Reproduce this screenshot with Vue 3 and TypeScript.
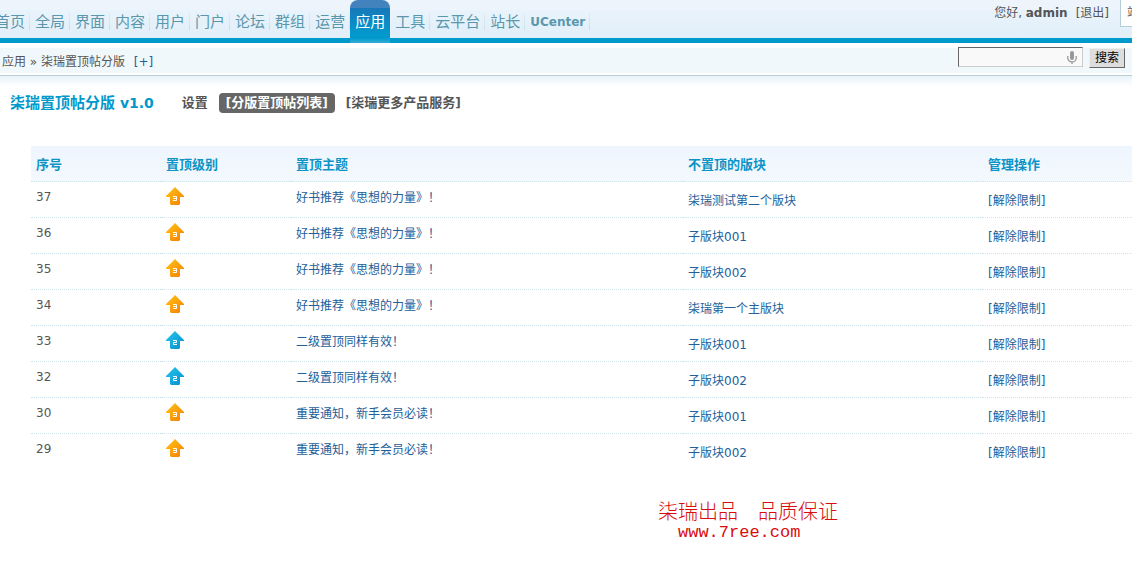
<script setup lang="ts">
import { ref } from 'vue'

interface PinnedRow {
  id: number
  level: 2 | 3
  subject: string
  forum: string
}

const menu: string[] = ['首页', '全局', '界面', '内容', '用户', '门户', '论坛', '群组', '运营', '应用', '工具', '云平台', '站长', 'UCenter']
const activeMenu = ref('应用')
const keyword = ref('')

const rows = ref<PinnedRow[]>([
  { id: 37, level: 3, subject: '好书推荐《思想的力量》\uFF01', forum: '柒瑞测试第二个版块' },
  { id: 36, level: 3, subject: '好书推荐《思想的力量》\uFF01', forum: '子版块001' },
  { id: 35, level: 3, subject: '好书推荐《思想的力量》\uFF01', forum: '子版块002' },
  { id: 34, level: 3, subject: '好书推荐《思想的力量》\uFF01', forum: '柒瑞第一个主版块' },
  { id: 33, level: 2, subject: '二级置顶同样有效\uFF01', forum: '子版块001' },
  { id: 32, level: 2, subject: '二级置顶同样有效\uFF01', forum: '子版块002' },
  { id: 30, level: 3, subject: '重要通知\uFF0C新手会员必读\uFF01', forum: '子版块001' },
  { id: 29, level: 3, subject: '重要通知\uFF0C新手会员必读\uFF01', forum: '子版块002' },
])
</script>

<template>
  <div class="page">
    <header class="header">
      <nav class="menu">
        <a
          v-for="item in menu"
          :key="item"
          href="#"
          class="menu-item"
          :class="{ active: item === activeMenu, latin: item === 'UCenter' }"
          @click.prevent="activeMenu = item"
        >{{ item }}</a>
      </nav>
      <div class="user">
        <p class="greeting">您好, <strong>admin</strong></p>
        <a href="#" class="logout">[退出]</a>
        <a href="#" class="site-home">站点首页</a>
      </div>
    </header>

    <div class="subbar">
      <p class="crumbs">应用 » 柒瑞置顶帖分版 <a href="#" class="plus">[+]</a></p>
      <form class="search" @submit.prevent>
        <div class="field">
          <input v-model="keyword" type="text" aria-label="搜索关键词" />
          <svg class="mic" width="10" height="14" viewBox="0 0 10 14" aria-hidden="true">
            <rect x="3" y="0" width="4" height="9" rx="2" fill="#999" />
            <path d="M.8 5v2a4.2 4 0 0 0 8.4 0V5M5 11v2" fill="none" stroke="#999" stroke-width="1.3" />
          </svg>
        </div>
        <button type="submit">搜索</button>
      </form>
    </div>

    <main>
      <div class="heading">
        <h1>柒瑞置顶帖分版<span> v1.0</span></h1>
        <a href="#" class="tab plain">设置</a>
        <a href="#" class="tab current"><i>[</i>分版置顶帖列表<i>]</i></a>
        <a href="#" class="tab"><i>[</i>柒瑞更多产品服务<i>]</i></a>
      </div>

      <table>
        <colgroup>
          <col class="c-id" />
          <col class="c-level" />
          <col class="c-subject" />
          <col class="c-forum" />
          <col />
        </colgroup>
        <thead>
          <tr>
            <th>序号</th>
            <th>置顶级别</th>
            <th>置顶主题</th>
            <th>不置顶的版块</th>
            <th>管理操作</th>
          </tr>
        </thead>
        <tbody>
          <tr v-for="row in rows" :key="row.id">
            <td class="num">{{ row.id }}</td>
            <td class="level">
              <svg width="18" height="18" viewBox="0 0 18 18" role="img" :aria-label="`置顶 ${row.level}`">
                <defs>
                  <linearGradient :id="`arrow-${row.id}`" x1="0" y1="0" x2="1" y2="1">
                    <stop offset="0" :stop-color="row.level === 3 ? '#ffc814' : '#25c8ee'" />
                    <stop offset="1" :stop-color="row.level === 3 ? '#f57c00' : '#078dcc'" />
                  </linearGradient>
                </defs>
                <path d="M9 0 18 9v1h-4v7l-1 1H5l-1-1v-7H0V9z" :fill="`url(#arrow-${row.id})`" />
                <path
                  :d="row.level === 3 ? 'M7 9.5h3.5v4H7M7 11.5h3.5' : 'M7 9.5h3.5v2h-3v2H11'"
                  fill="none"
                  stroke="#fff"
                  stroke-width="1"
                />
              </svg>
            </td>
            <td class="subject"><a href="#">{{ row.subject }}</a></td>
            <td class="low"><a href="#">{{ row.forum }}</a></td>
            <td class="low"><a href="#">[解除限制]</a></td>
          </tr>
        </tbody>
      </table>

      <footer>
        <p>柒瑞出品&#x3000;品质保证</p>
        <a href="#">www.7ree.com</a>
      </footer>
    </main>
  </div>
</template>

<style>
body {
  margin: 0;
  background: #fff;
}
</style>

<style scoped>
.page {
  overflow: hidden;
  font: 12px/18px "DejaVu Sans", "Noto Sans CJK SC", sans-serif;
  color: #555;
}

a {
  color: #236099;
  text-decoration: none;
}

p,
h1 {
  margin: 0;
}

.header {
  display: flex;
  justify-content: space-between;
  height: 38px;
  border-bottom: 5px solid #0099cc;
  background: linear-gradient(#edf4fb 10px, #e9f3fb 10px, #e1eff9);
}

.menu {
  display: flex;
  flex: none;
  margin-left: -10px;
}

.menu-item {
  box-sizing: border-box;
  height: 38px;
  padding: 10px 5px 0;
  font-size: 15px;
  line-height: 24px;
  color: #5a97ad;
  white-space: nowrap;
  background: linear-gradient(#e3eef4, #c9dfe9) right 12px / 1px 18px no-repeat;
}

.menu-item.latin {
  font-size: 12px;
  font-weight: bold;
}

.menu-item.active {
  height: 43px;
  border-radius: 8px 8px 0 0;
  color: #fff;
  background: linear-gradient(#4383bd 8px, #1878b9 8px, #0497cb 32px, #0099cc 38px, #35add5);
}

.user {
  display: flex;
  line-height: 26px;
  white-space: nowrap;
}

.logout {
  margin: 0 11px 0 8px;
  color: #555;
}

.site-home {
  box-sizing: border-box;
  width: 12px;
  height: 27px;
  padding-left: 6px;
  overflow: hidden;
  border: solid #b5cfd9;
  border-width: 0 0 1px 1px;
  background: #fff;
  color: #555;
}

.subbar {
  display: flex;
  justify-content: space-between;
  height: 32px;
  border-bottom: 1px solid #b9cdd3;
  background: linear-gradient(#fff 5px, #f1f8fc 5px, #f1f8fc 30px, #fff 30px);
}

.crumbs {
  padding: 10px 0 0 2px;
}

.plus {
  margin-left: 5px;
}

.search {
  display: flex;
  gap: 6px;
  padding: 4px 7px 0 0;
}

.field {
  position: relative;
}

.field input {
  box-sizing: border-box;
  display: block;
  width: 125px;
  height: 20px;
  padding: 0 20px 0 4px;
  border: 1px solid;
  border-color: #666 #ccc #ccc #666;
  background: #f9f9f9;
  font: inherit;
}

.mic {
  position: absolute;
  top: 4px;
  right: 6px;
}

.search button {
  width: 36px;
  height: 20px;
  margin-top: 1px;
  padding: 0;
  border: 1px solid;
  border-color: #eee #666 #666 #eee;
  background: #ddd;
  color: #000;
  font: inherit;
}

main {
  background: linear-gradient(#e6f2fa, #fff) top / 100% 10px no-repeat;
}

.heading {
  display: flex;
  align-items: center;
  height: 20px;
  padding: 17px 0 33px 10px;
}

h1 {
  margin-right: 28px;
  font-size: 15px;
  line-height: 20px;
  color: #0099cc;
}

h1 span {
  font-size: 14px;
}

.tab {
  margin-right: 11px;
  font-size: 13px;
  font-weight: bold;
  line-height: 20px;
  color: #555;
}

.tab.current {
  padding: 0 7px;
  border-radius: 4px;
  background: #666;
  color: #fff;
}

.tab i {
  font-size: 12px;
  font-style: normal;
}

table {
  width: calc(100% - 31px);
  margin-left: 31px;
  border-collapse: separate;
  border-spacing: 0;
  table-layout: fixed;
}

.c-id,
.c-level {
  width: 130px;
}

.c-subject {
  width: 392px;
}

.c-forum {
  width: 300px;
}

th,
td {
  box-sizing: border-box;
  height: 36px;
  padding: 0 5px;
  border-bottom: 1px dotted #cfe3ec;
  text-align: left;
  vertical-align: top;
}

th {
  padding-top: 2px;
  background: linear-gradient(#eef5fe, #f3f9fd);
  font-size: 13px;
  color: #0d93c5;
  vertical-align: middle;
}

td {
  padding-top: 6px;
}

tbody tr:last-child td {
  border-bottom: 0;
}

td.level {
  padding-top: 5px;
}

.level svg {
  display: block;
}

td.subject {
  padding-top: 7px;
}

td.low {
  padding-top: 10px;
}

footer {
  padding: 30px 0 0 658px;
  font-size: 20px;
  line-height: 22px;
  color: #d90c0c;
}

footer p {
  font-family: "Noto Sans CJK SC", sans-serif;
  font-weight: 300;
}

footer a {
  display: block;
  padding-left: 20px;
  color: inherit;
  font-family: "Liberation Mono", monospace;
  font-size: 17px;
}
</style>
